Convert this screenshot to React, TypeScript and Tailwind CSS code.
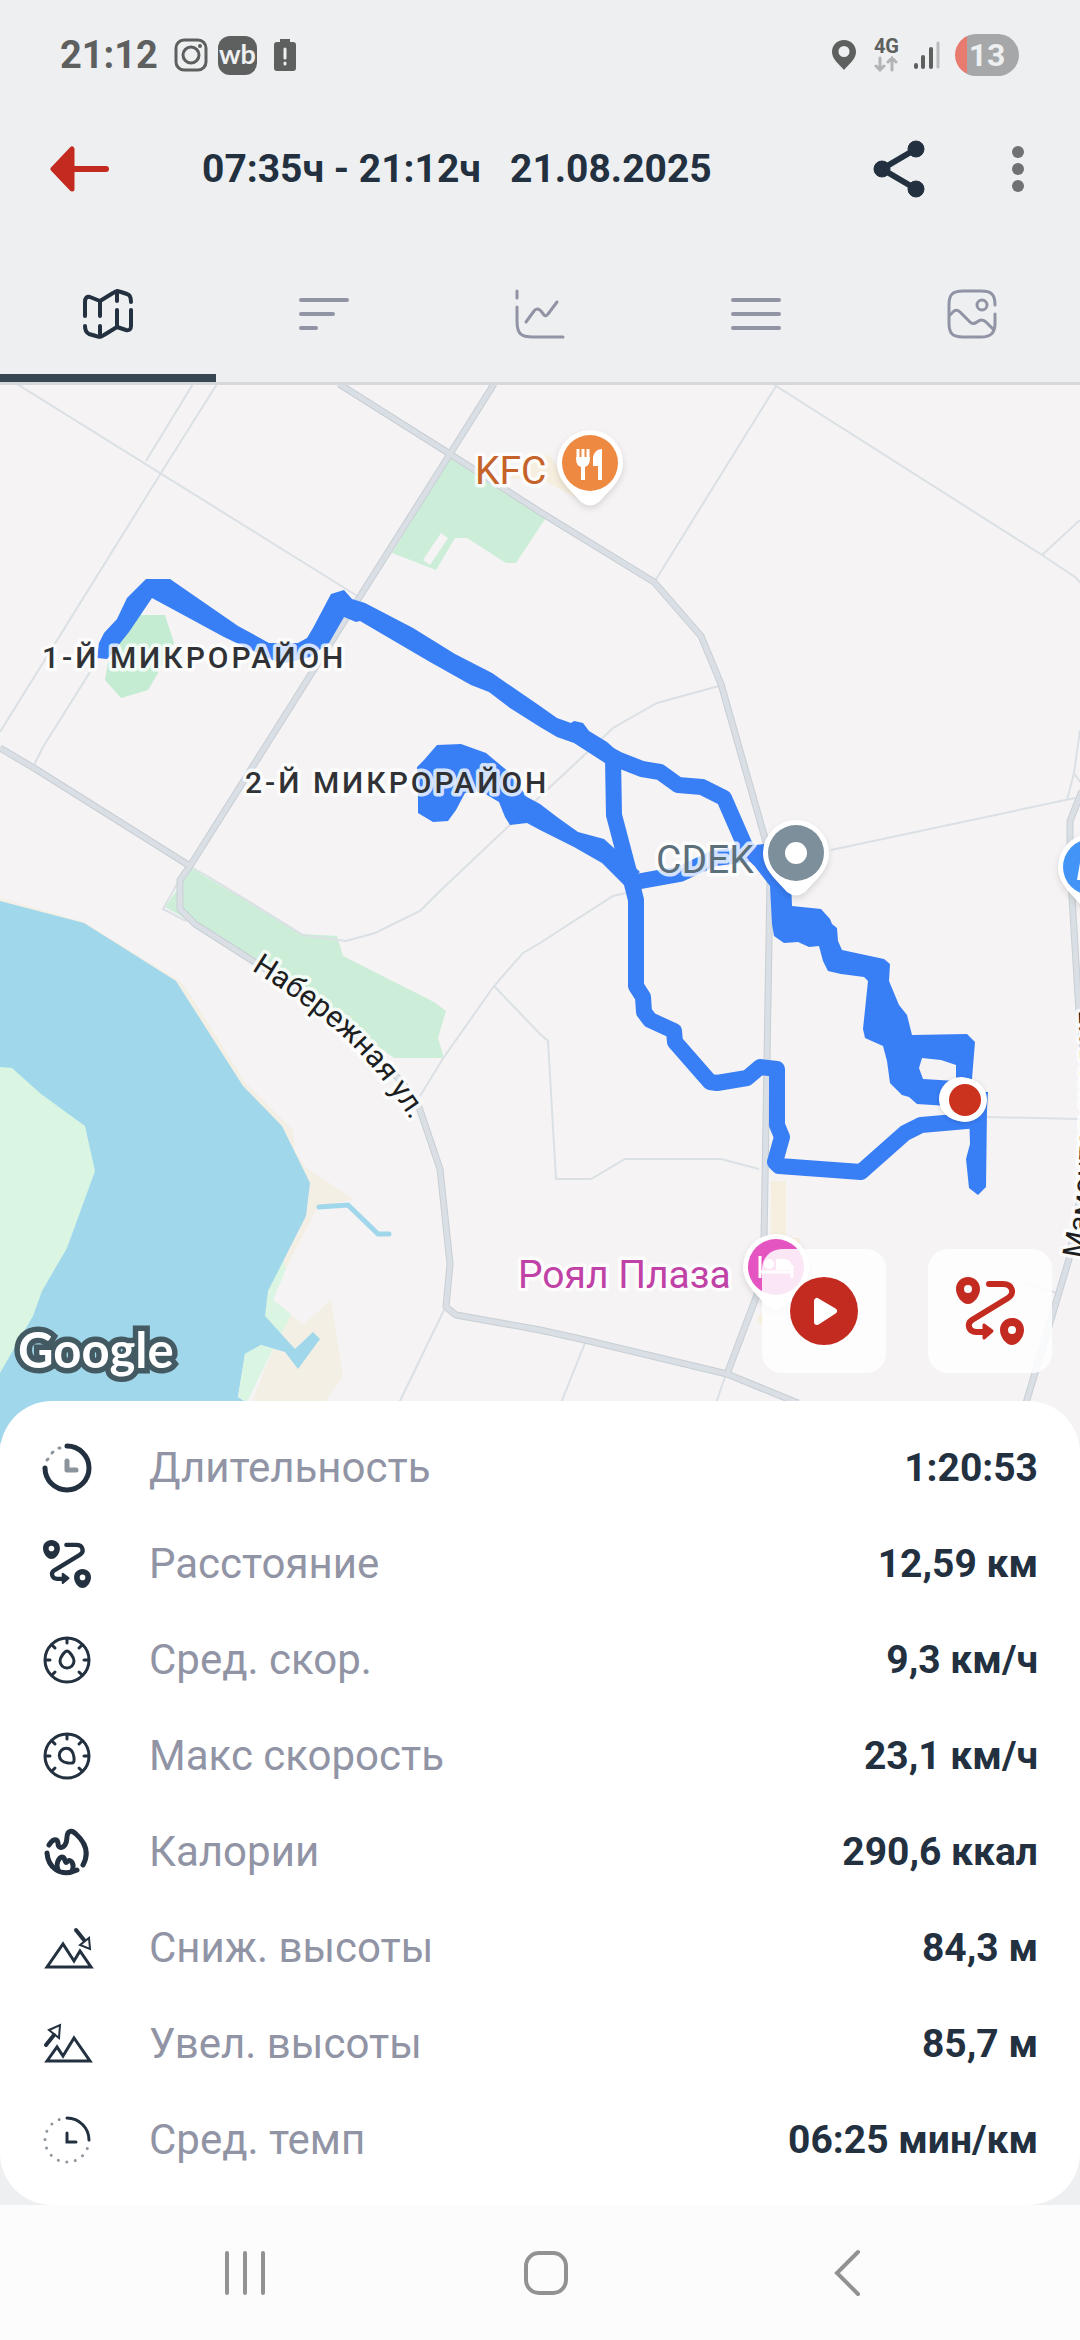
import { useState } from "react";
import type { ReactNode } from "react";

const minorRoads = [
  "M17 384L359 597",
  "M193 384L146 461",
  "M217 384L161 473L0 732",
  "M90 672L43 747L34 765",
  "M719 686L657 703L613 728L547 790L441 890L420 911L375 933L346 941L303 935L214 880L193 868",
  "M655 581L776 386L1042 555L1075 577L1084 586",
  "M772 382L776 386M1042 555L1080 520",
  "M831 850L1075 798",
  "M1080 730L1074 773L1067 800M1074 773L1080 782",
  "M626 893L613 896L540 943L523 953L494 986L444 1057L420 1096",
  "M494 986L540 1034L548 1041L556 1179H591L625 1159H721L759 1169",
  "M987 1117L1080 1119",
  "M444 1310L399 1403",
  "M585 1343L561 1403",
  "M725 1377L716 1403",
  "M1022 1282L1057 1293",
  "M177 884L163 909L186 921",
];

const majorRoads = [
  "M339 384L450 454L540 512L654 582L701 636L721 684L766 842L770 880L767 1059L764 1240L757 1295L727 1374",
  "M494 384L450 454L359 598L190 866L180 880V909L195 924L253 961L310 997L360 1040L400 1080L417 1101L440 1169L450 1264L446 1307L456 1315L540 1330L585 1340L727 1374L798 1403",
  "M0 748L34 768L190 866",
  "M1082 791L1070 821V843L1072 897L1079 1012L1092 1130L1069 1259L1026 1403L1014 1444",
];

const stats: { label: string; value: string; icon: ReactNode }[] = [
  { label: "Длительность", value: "1:20:53", icon: <DurationIcon /> },
  { label: "Расстояние", value: "12,59 км", icon: <RouteIcon className="size-12" /> },
  { label: "Сред. скор.", value: "9,3 км/ч", icon: <GaugeIcon angle={0} /> },
  { label: "Макс скорость", value: "23,1 км/ч", icon: <GaugeIcon angle={135} /> },
  { label: "Калории", value: "290,6 ккал", icon: <FlameIcon /> },
  { label: "Сниж. высоты", value: "84,3 м", icon: <DescentIcon /> },
  { label: "Увел. высоты", value: "85,7 м", icon: <AscentIcon /> },
  { label: "Сред. темп", value: "06:25 мин/км", icon: <PaceIcon /> },
];

const tabs: { name: string; icon: ReactNode }[] = [
  {
    name: "Карта",
    icon: (
      <>
        <path d="M2 27V13Q2 7 7 8L17 12V27M17 12L30 4Q34 1 38 3L44 5Q48 6 48 13M34 2V12" />
        <path d="M48 21V37Q48 42 43 41L34 38V21M34 38L21 46Q17 49 13 47L6 45Q2 43 2 37M17 37V48" />
      </>
    ),
  },
  { name: "Отрезки", icon: <path d="M2 11H48M2 25H34M2 39H17" /> },
  {
    name: "Графики",
    icon: <path d="M2 2V9M2 18V32C2 45 6 48 18 48H48M11 33L19 22Q22 18 26 22L29 26Q31 28 33 25L42 13" strokeWidth="3" />,
  },
  { name: "Список", icon: <path d="M2 11H48M2 25H48M2 39H48" /> },
  {
    name: "Фото",
    icon: (
      <g strokeWidth="3">
        <path d="M48 16C48 5 44 2 34 2H16C5 2 2 6 2 16V34C2 44 5 48 16 48H34C44 48 48 44 48 34V25" />
        <circle cx="35" cy="16" r="5" />
        <path d="M3 26L7 22Q10 20 13 23L23 33Q26 36 30 33Q35 29 39 33L46 40" />
      </g>
    ),
  },
];

function DurationIcon() {
  return (
    <svg viewBox="0 0 48 48" className="size-12 overflow-visible" fill="none" strokeLinecap="round">
      <path d="M24 2A22 22 0 1 1 2 24" stroke="currentColor" strokeWidth="5" />
      <path d="M4 16L5 15M9 9L10 8M16 4L17 4" stroke="#8b939b" strokeWidth="3" />
      <path d="M24 17V26H33" stroke="#8b939b" strokeWidth="5" strokeLinejoin="round" />
    </svg>
  );
}

function PaceIcon() {
  return (
    <svg viewBox="0 0 48 48" className="size-12 overflow-visible" fill="none" strokeLinecap="round">
      <circle cx="24" cy="24" r="22" stroke="#8b939b" strokeWidth="3" strokeDasharray="0 8.64" />
      <path d="M24 2A22 22 0 0 1 46 24" stroke="#fff" strokeWidth="4" />
      <path d="M24 2A22 22 0 0 1 46 24M24 17V26H33" stroke="currentColor" strokeWidth="3" />
    </svg>
  );
}

function RouteIcon({ className }: { className: string }) {
  return (
    <svg viewBox="0 0 68 68" className={className} fill="none">
      <path
        d="M33 7H47C57 7 59 17 52 21L16 43C10 47 13 55 20 55H30"
        stroke="currentColor"
        strokeWidth="6"
        strokeLinecap="round"
      />
      <path d="M28 48V61L36 54Z" fill="currentColor" stroke="currentColor" strokeWidth="3" strokeLinejoin="round" />
      <path
        d="M12 0C19 0 24 5 24 12C24 19 18 27 12 27C6 27 0 19 0 12C0 5 5 0 12 0ZM12 8A4 4 0 1 0 12 16A4 4 0 1 0 12 8Z"
        fill="currentColor"
        fillRule="evenodd"
      />
      <path
        d="M56 41C63 41 68 46 68 53C68 60 62 68 56 68C50 68 44 60 44 53C44 46 49 41 56 41ZM56 49A4 4 0 1 0 56 57A4 4 0 1 0 56 49Z"
        fill="currentColor"
        fillRule="evenodd"
      />
    </svg>
  );
}

function GaugeIcon({ angle }: { angle: number }) {
  return (
    <svg viewBox="0 0 48 48" className="size-12" fill="none" stroke="currentColor" strokeWidth="3" strokeLinecap="round">
      <circle cx="24" cy="24" r="22" />
      <path d="M24 3V7M3 24H7M41 24H45M9 9L12 12M39 9L36 12M9 39L12 36M39 39L36 36" />
      <path
        d="M24 15C26 15 31 21 31 25A7 7 0 0 1 17 25C17 21 22 15 24 15Z"
        transform={`rotate(${angle} 24 24)`}
      />
    </svg>
  );
}

function FlameIcon() {
  return (
    <svg viewBox="0 0 48 48" className="size-12" fill="none" stroke="currentColor" strokeWidth="5" strokeLinecap="round" strokeLinejoin="round">
      <path d="M6 17C9 12 14 9 15 15C15 20 19 21 22 17C25 13 23 8 25 5C27 2 30 3 33 6C44 16 46 26 40 37" />
      <path d="M4 25C5 39 17 50 34 42" />
      <path d="M15 42C12 34 18 26 21 30C23 34 22 36 25 33C28 31 32 36 29 43" />
    </svg>
  );
}

function DescentIcon() {
  return (
    <svg viewBox="0 0 48 48" className="size-12 overflow-visible" fill="none" stroke="currentColor" strokeWidth="3">
      <path d="M4 43L20 20L31 37L37 27L48 43Z" />
      <path d="M33 6L41 16" strokeWidth="4" strokeLinecap="round" />
      <path d="M37 21L46 14L47 25Z" strokeWidth="2" />
    </svg>
  );
}

function AscentIcon() {
  return (
    <svg viewBox="0 0 48 48" className="size-12 overflow-visible" fill="none" stroke="currentColor" strokeWidth="3">
      <path d="M4 41L14 27L20 36L31 18L47 41Z" />
      <path d="M3 25L11 15" strokeWidth="4" strokeLinecap="round" />
      <path d="M6 10L17 5L16 18Z" strokeWidth="2" />
    </svg>
  );
}

function Pin({ x, y, color, children }: { x: number; y: number; color: string; children?: ReactNode }) {
  return (
    <g transform={`translate(${x} ${y})`}>
      <path
        d="M-33 0A33 33 0 1 1 33 0C33 10 28 18 22 25L9 39Q0 46 -9 39L-22 25C-28 18 -33 10 -33 0Z"
        fill="#fff"
        className="drop-shadow-md"
      />
      <circle r="28" fill={color} />
      {children}
    </g>
  );
}

function TrackMap() {
  return (
    <svg viewBox="0 385 1080 1058" className="block h-auto w-full bg-[#f5f3f4]" role="img" aria-label="Карта маршрута">
      {/* shore, water, islands */}
      <g fill="#f4efe4">
        <path d="M0 898L84 922L178 980L186 988L245 1082L293 1130L295 1150L305 1167L354 1199L317 1208L286 1269L250 1300L0 1300Z" />
        <path d="M291 1314L303 1325L331 1300L343 1376L326 1401L310 1444H235L273 1349L282 1333Z" />
        <path d="M532 452L550 456L580 500L547 482L510 478Z" fill="#f6efdf" />
        <path d="M771 1181H786V1238H800V1260H771Z" fill="#f6efdf" />
        <path d="M757 1319L763 1311V1328Z" fill="#f6efdf" />
      </g>
      <path d="M284 1260L286 1269L273 1300L291 1314L282 1333L260 1325L262 1285Z" fill="#daf6e3" />
      <path
        d="M0 901L84 923L176 981L243 1086L282 1126L310 1183L306 1216L268 1291L265 1316L295 1349L313 1332L320 1339L298 1369L285 1352L261 1345L245 1354L238 1397L246 1402V1444H0Z"
        fill="#a1d7eb"
      />
      <path d="M245 1354L261 1345L273 1349L247 1402L238 1397Z" fill="#daf6e3" />
      <path d="M0 1067L12 1068L41 1094L85 1126L95 1171L67 1248L42 1291L33 1316L0 1373Z" fill="#daf6e3" />
      <path d="M319 1207L348 1205L378 1234H389" fill="none" stroke="#a1d7eb" strokeWidth="5" strokeLinecap="round" />

      {/* parks */}
      <g fill="#cceed9">
        <path
          d="M450 458L540 514L545 519L516 563H506L467 538H455L436 570L392 553ZM441 533L448 538L430 565L423 560Z"
          fillRule="evenodd"
        />
        <path d="M139 615H165L174 643L158 673L148 690L121 698L105 680L108 663L121 640Z" fill="#c3ecd2" />
        <path d="M191 868L303 934L337 936L343 956L434 1002L446 1011L438 1038L444 1058H394L344 1022L253 961L195 924L165 907L179 887Z" />
      </g>

      <g fill="none" stroke="#dbe0e5" strokeWidth="2">
        {minorRoads.map((d) => (
          <path key={d} d={d} />
        ))}
      </g>
      <g fill="none" stroke="#c8cfd4" strokeWidth="7" strokeLinejoin="round">
        {majorRoads.map((d) => (
          <path key={d} d={d} />
        ))}
      </g>
      <g fill="none" stroke="#d9dfe4" strokeWidth="5" strokeLinejoin="round">
        {majorRoads.map((d) => (
          <path key={d} d={d} />
        ))}
      </g>

      {/* recorded track */}
      <g fill="#387ef5">
        <path d="M97 658L99 643L104 633L117 619L127 598L146 579H170L238 626L269 643H298L307 638L313 628L331 594L344 590L352 599L365 603L413 628L455 654L492 673L540 706L557 718L571 723L574 721L583 723L589 731L607 742L617 751L605 763L574 743L557 737L540 727L510 708L489 692L471 685L430 662L360 621L356 622L344 617L329 643L310 657L286 663L272 660L224 637L152 598L129 632L121 642L114 652L107 659Z" />
        <path d="M417 767L424 760L437 745L461 744L486 753L510 773L527 797L540 804L557 817L578 832L604 839L614 848L640 872L624 885L602 863L574 847L540 830L527 823L510 825L505 817L499 802L482 792L465 793L456 810L448 821L433 822L418 813V800Z" />
        <path
          d="M750 850L763 845L791 860V880L792 906L821 909L830 919L832 924L837 928L838 941L842 950L884 959L890 964L889 981L899 1005L907 1015L912 1035L967 1034L975 1042L972 1079L964 1107L917 1104L909 1097L902 1095L890 1083L887 1061L883 1046L865 1038L863 1029L868 981L864 977L841 974L828 971L823 961L819 946L809 947L798 942L784 943L774 936L772 924L770 886L756 868ZM922 1058L941 1060L956 1065V1081L923 1079L919 1068Z"
          fillRule="evenodd"
        />
        <path d="M969 1110L970 1144L966 1159L969 1188L978 1195L986 1187L987 1109L988 1092H975Z" />
      </g>
      <g fill="none" stroke="#387ef5" strokeWidth="16" strokeLinejoin="round">
        <path d="M606 753L619 760L642 769L660 772L678 785L702 787L724 798L745 846L765 865" />
        <path d="M613 758L614 815L629 872L636 900V986L643 997L644 1012L650 1020L674 1031L675 1042L710 1082L717 1083L747 1078L760 1067L777 1069V1125L782 1137L775 1162L779 1166L861 1172L905 1133L921 1125L978 1120" />
        <path d="M630 883L680 874L715 858L765 852" />
      </g>

      <g fill="#fff" className="drop-shadow-sm">
        <circle cx="961" cy="1099" r="22" />
        <circle cx="965" cy="1100" r="22" />
      </g>
      <circle cx="965" cy="1100" r="16" fill="#cb331f" />

      {/* labels */}
      <g
        className="font-[Roboto,sans-serif]"
        stroke="#fff"
        strokeOpacity="0.8"
        strokeWidth="7"
        strokeLinejoin="round"
        paintOrder="stroke"
      >
        <g className="text-[30px] font-medium tracking-[3px]" fill="#303236">
          <text x="42" y="668">1-Й МИКРОРАЙОН</text>
          <text x="245" y="793">2-Й МИКРОРАЙОН</text>
        </g>
        <g className="text-[39px]">
          <text x="475" y="484" fill="#c5622a">KFC</text>
          <text x="656" y="873" fill="#5c707c">CDEK</text>
          <text x="518" y="1288" fill="#c042a6">Роял Плаза</text>
        </g>
        <g className="text-[30px]" fill="#1c1e21">
          <path id="embankment" d="M251 970Q305 1003 342 1036T420 1134" fill="none" stroke="none" />
          <path id="avenue" d="M1083 1259C1092 1215 1102 1150 1093 980" fill="none" stroke="none" />
          <text>
            <textPath href="#embankment">Набережная ул.</textPath>
          </text>
          <text>
            <textPath href="#avenue">Мамонтовская ул.</textPath>
          </text>
        </g>
      </g>

      <Pin x={590} y={463} color="#ee8941">
        <path d="M-12 -14V-5M-7 -14V-5M-2 -14V-5" stroke="#fff" strokeWidth="3" />
        <path d="M-14 -6H0C0 1 -2 3 -5 4V17H-9V4C-12 3 -14 1 -14 -6ZM12 -14V17H8V3H3V-4C3 -10 7 -14 12 -14Z" fill="#fff" />
      </Pin>
      <Pin x={796} y={853} color="#7d8f9a">
        <circle r="11" fill="#fff" />
      </Pin>
      <Pin x={1091} y={867} color="#4295f7">
        <path d="M-14 13L-10 -10H8V13Z" fill="#fff" />
      </Pin>
      <Pin x={776} y={1267} color="#e455c2">
        <path d="M-16 -11V11M-16 5H16M16 11V-2" stroke="#fff" strokeWidth="3" />
        <circle cx="-7" cy="-3" r="5" fill="#fff" />
        <path d="M0 -8H8C13 -8 16 -4 16 0V3H0Z" fill="#fff" />
      </Pin>

      <text
        x="18"
        y="1368"
        className="font-[Lato,sans-serif] text-[49px] font-bold"
        fill="#fff"
        stroke="#435a63"
        strokeWidth="11"
        paintOrder="stroke"
      >
        Google
      </text>
    </svg>
  );
}

function StatusBar() {
  return (
    <div className="flex h-[110px] items-center justify-between pr-[61px] pl-[60px] text-[#5e605f]">
      <div className="flex items-center">
        <span className="text-[38px] leading-none font-bold">21:12</span>
        <svg viewBox="0 0 34 34" className="ml-4 size-[34px]" fill="none" stroke="currentColor" strokeWidth="3">
          <rect x="2" y="2" width="30" height="30" rx="8" />
          <circle cx="17" cy="17" r="8" />
          <circle cx="26" cy="8" r="2" fill="currentColor" stroke="none" />
        </svg>
        <span className="ml-[10px] flex size-[39px] items-center justify-center rounded-xl bg-[#5e605f] pb-1 font-[Lato,sans-serif] text-[27px] leading-none font-bold text-[#edeff1]">
          wb
        </span>
        <svg viewBox="0 0 24 34" className="ml-4 h-[34px] w-6">
          <path d="M7 1H17V4H20Q23 4 23 7V30Q23 33 20 33H4Q1 33 1 30V7Q1 4 4 4H7Z" fill="currentColor" />
          <path d="M12 11V20M12 25V26" stroke="#edeff1" strokeWidth="3" strokeLinecap="round" />
        </svg>
      </div>
      <div className="flex items-center">
        <svg viewBox="0 0 24 30" className="h-[30px] w-6">
          <path
            d="M12 0C19 0 24 5 24 12C24 19 17 24 12 30C7 24 0 19 0 12C0 5 5 0 12 0ZM12 6A5 5 0 1 0 12 17A5 5 0 1 0 12 6Z"
            fill="currentColor"
            fillRule="evenodd"
          />
        </svg>
        <div className="ml-[18px] flex flex-col items-center">
          <span className="text-xl leading-4 font-bold">4G</span>
          <svg viewBox="0 0 24 16" className="mt-[2px] h-4 w-6" fill="none" stroke="#b2b4b5" strokeWidth="3" strokeLinecap="round">
            <path d="M6 2V14M2 10L6 14L10 10M18 14V2M14 6L18 2L22 6" />
          </svg>
        </div>
        <svg viewBox="0 0 28 30" className="ml-[14px] h-[30px] w-7" fill="none" stroke="currentColor" strokeWidth="4" strokeLinecap="round">
          <path d="M3 25V27M10 17V27M18 9V27" />
          <path d="M25 3V27" stroke="#b9bbbc" strokeWidth="3" />
        </svg>
        <span className="ml-[14px] flex h-[42px] w-16 items-center justify-center overflow-hidden rounded-full bg-linear-to-r from-[#e87b70] from-18% to-[#a5a7a9] to-18% text-[32px] leading-none font-bold text-[#edeff1]">
          13
        </span>
      </div>
    </div>
  );
}

export default function App() {
  const [activeTab, setActiveTab] = useState("Карта");

  return (
    <div className="flex min-h-screen flex-col bg-[#edeff1] font-[Roboto,sans-serif] text-[#22303f]">
      <StatusBar />

      <header className="flex h-[118px] items-center pr-14 pl-[50px]">
        <button type="button" aria-label="Назад" className="text-[#c42b20]">
          <svg viewBox="0 0 60 48" className="h-12 w-[60px]" fill="currentColor" stroke="currentColor" strokeLinejoin="round" strokeLinecap="round">
            <path d="M3 24L22 4V44Z" strokeWidth="5" />
            <path d="M24 24H56" strokeWidth="6" />
          </svg>
        </button>
        <h1 className="ml-[92px] flex-1 text-[39px] leading-none font-bold whitespace-pre">
          07:35ч - 21:12ч   21.08.2025
        </h1>
        <button type="button" aria-label="Поделиться">
          <svg viewBox="0 0 52 60" className="h-[60px] w-[52px]" fill="currentColor" stroke="currentColor">
            <path d="M43 10L9 30L43 50" fill="none" strokeWidth="6" />
            <circle cx="9" cy="30" r="8" />
            <circle cx="43" cy="10" r="8" />
            <circle cx="43" cy="50" r="8" />
          </svg>
        </button>
        <button type="button" aria-label="Меню" className="ml-[87px] text-[#707172]">
          <svg viewBox="0 0 12 48" className="h-12 w-3" fill="currentColor">
            <circle cx="6" cy="7" r="6" />
            <circle cx="6" cy="24" r="6" />
            <circle cx="6" cy="41" r="6" />
          </svg>
        </button>
      </header>

      <nav className="grid h-[157px] grid-cols-5 border-b-[3px] border-[#d6d8da]">
        {tabs.map((tab) => (
          <button
            key={tab.name}
            type="button"
            aria-label={tab.name}
            onClick={() => setActiveTab(tab.name)}
            className={`flex items-center justify-center border-b-8 pt-[26px] ${
              activeTab === tab.name ? "border-[#384552] text-[#22303f]" : "border-transparent text-[#9194a5]"
            }`}
          >
            <svg viewBox="0 0 50 50" className="size-[50px]" fill="none" stroke="currentColor" strokeWidth="4" strokeLinecap="round" strokeLinejoin="round">
              {tab.icon}
            </svg>
          </button>
        ))}
      </nav>

      <main>
        <section className="relative">
          <TrackMap />
          {/* floating map controls */}
          <div className="absolute right-7 bottom-[70px] flex gap-[42px] text-[#c42b20]">
            <button type="button" aria-label="Воспроизвести" className="flex size-[124px] items-center justify-center rounded-[20px] bg-white/85">
              <svg viewBox="0 0 68 68" className="size-[68px]">
                <circle cx="34" cy="34" r="34" fill="currentColor" />
                <path d="M27 24V45L44 34Z" fill="#fff" stroke="#fff" strokeWidth="6" strokeLinejoin="round" />
              </svg>
            </button>
            <button type="button" aria-label="Маршрут" className="flex size-[124px] items-center justify-center rounded-[20px] bg-white/85">
              <RouteIcon className="size-[68px]" />
            </button>
          </div>
        </section>

        <dl className="relative -mt-[42px] rounded-[52px] bg-white pt-[19px] pr-[42px] pb-[17px] pl-[43px]">
          {stats.map((stat) => (
            <div key={stat.label} className="flex h-24 items-center">
              <dt className="flex items-center text-[42px] leading-none text-[#9194a5]">
                <span className="mr-[58px] text-[#22303f]">{stat.icon}</span>
                {stat.label}
              </dt>
              <dd className="ml-auto text-[39px] leading-none font-bold">{stat.value}</dd>
            </div>
          ))}
        </dl>
      </main>

      <footer className="flex h-[135px] items-center bg-[#fcfcfc] pr-[82px] pl-[94px] text-[#929292]">
        <button type="button" aria-label="Недавние" className="flex flex-1 justify-center">
          <svg viewBox="0 0 44 48" className="h-12 w-11" stroke="currentColor" strokeWidth="4" strokeLinecap="round">
            <path d="M4 4V44M22 4V44M40 4V44" />
          </svg>
        </button>
        <button type="button" aria-label="Домой" className="flex flex-1 justify-center">
          <svg viewBox="0 0 48 48" className="size-12" fill="none" stroke="currentColor" strokeWidth="4">
            <rect x="4" y="4" width="40" height="40" rx="13" />
          </svg>
        </button>
        <button type="button" aria-label="Назад" className="flex flex-1 justify-center">
          <svg viewBox="0 0 28 48" className="h-12 w-7" fill="none" stroke="currentColor" strokeWidth="4" strokeLinecap="round">
            <path d="M25 3L4 24L25 45" />
          </svg>
        </button>
      </footer>
    </div>
  );
}
